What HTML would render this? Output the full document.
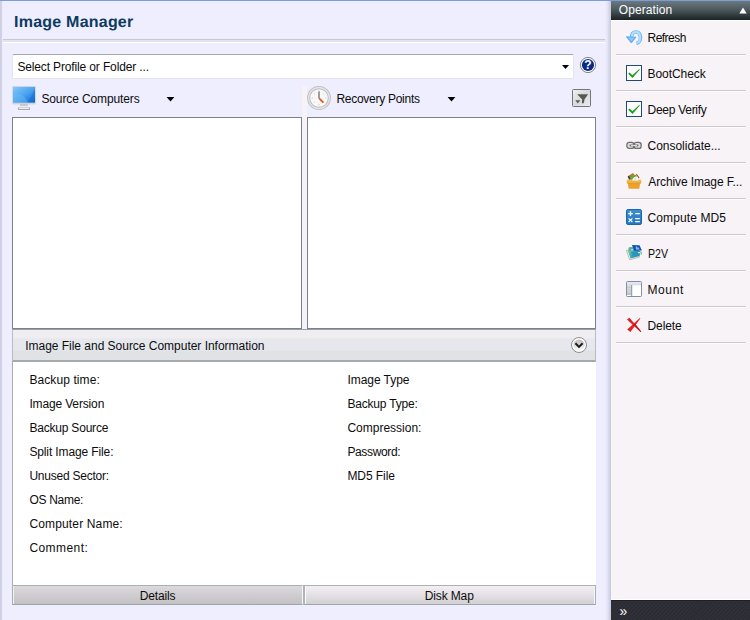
<!DOCTYPE html>
<html>
<head>
<meta charset="utf-8">
<title>Image Manager</title>
<style>
html,body{margin:0;padding:0;}
body{width:750px;height:620px;overflow:hidden;position:relative;background:#eeeefe;font-family:"Liberation Sans",sans-serif;font-size:12px;color:#0c0c0c;}
.abs{position:absolute;}
.t{position:absolute;white-space:nowrap;line-height:14px;height:14px;}
#topline{left:0;top:0;width:750px;height:1px;background:#7b9dd8;}
#leftedge{left:0;top:1px;width:3px;height:619px;background:linear-gradient(90deg,#cdcde1 0,#d6d6ea 2px,#ebebfb 2px);}
#title{font-size:16px;text-rendering:geometricPrecision;font-weight:bold;color:#0d3b5e;line-height:20px;height:20px;}
#hline{left:3px;top:39px;width:602px;height:3px;background:linear-gradient(#c8c8d0 0,#c8c8d0 1px,#e2e2ec 1px);}
#hline2{left:3px;top:42px;width:602px;height:1px;background:#ffffff;}
#combo{left:12px;top:54px;width:562px;height:25px;box-sizing:border-box;background:#fff;border:1px solid #e4e4ec;border-top-color:#a6a6ac;border-radius:2px;}
.list{background:#fff;border:1px solid #7a8090;box-sizing:border-box;}
#split{left:302px;top:86px;width:5px;height:243px;background:#f6f2f6;}
#infohdr{left:12px;top:329px;width:584px;height:33px;box-sizing:border-box;background:linear-gradient(#f0eef0 0,#efedef 8px,#e6e8ee 9px,#e5e7ed 20px,#dfe3e6 21px,#dfe3e6 30px);border-top:1px solid #989eaa;border-bottom:2px solid #a6aaae;border-left:1px solid #b8bcc2;border-right:1px solid #b8bcc2;}
#infobody{left:12px;top:362px;width:584px;height:223px;background:#fff;box-sizing:border-box;border-left:1px solid #acacac;}
.btn{box-sizing:border-box;height:20px;border-top:1px solid #a8b0b4;border-bottom:1px solid #9ca6a8;}
#shadow{left:605px;top:1px;width:6px;height:619px;background:linear-gradient(90deg,#eeeefe,#e4e4f6 40%,#c4c8d8);}
#panel{left:611px;top:0;width:139px;height:620px;background:#f7f3f7;}
#phdr{left:0;top:0;width:139px;height:21px;box-sizing:border-box;border-top:1px solid #7b9dd8;background:linear-gradient(#6c7a80 0,#4a575c 9px,#1a2224 19px,#fff 19px);}
.sep{position:absolute;left:5px;width:130px;height:1px;background:#cccacc;box-shadow:0 1px 0 #fdfbfd;}
.it{position:absolute;white-space:nowrap;line-height:14px;height:14px;}
#pbot{left:0;top:599px;width:139px;height:21px;box-sizing:border-box;border-top:1px solid #fff;background:linear-gradient(#1f1f25 0,#1f1f25 1px,rgba(0,0,0,0) 1px),repeating-linear-gradient(135deg,#2b2b33 0,#2b2b33 1.4px,#303038 1.4px,#303038 2.8px);}
</style>
</head>
<body>
<div class="abs" id="topline"></div>
<div class="abs" id="leftedge"></div>
<div class="t" id="title" style="left:14.1px;top:12.5px;letter-spacing:0.22px;">Image Manager</div>
<div class="abs" id="hline"></div>
<div class="abs" id="hline2"></div>

<div class="abs" id="combo"></div>
<div class="t" style="left:17.4px;top:60px;letter-spacing:-0.14px;">Select Profile or Folder ...</div>
<svg class="abs" style="left:561px;top:64px;" width="9" height="6" viewBox="0 0 9 6"><path d="M1 1H8L4.5 5Z" fill="#000"/></svg>

<!-- help icon -->
<svg class="abs" style="left:579px;top:56px;" width="18" height="18" viewBox="0 0 18 18">
  <circle cx="9" cy="9" r="7.6" fill="#fff" stroke="#74747e" stroke-width="0.9"/>
  <circle cx="9" cy="9" r="6.1" fill="#0a2a86"/>
  <text x="9" y="13" text-anchor="middle" font-family="Liberation Sans, sans-serif" font-weight="bold" font-size="12" fill="#fff">?</text>
</svg>

<!-- monitor icon -->
<svg class="abs" style="left:12px;top:86px;" width="24" height="24" viewBox="0 0 24 24">
  <defs>
    <linearGradient id="mg" x1="0" y1="0" x2="0.9" y2="1"><stop offset="0" stop-color="#86c8fc"/><stop offset="0.5" stop-color="#4ea6f0"/><stop offset="1" stop-color="#1670d8"/></linearGradient>
  </defs>
  <rect x="0.2" y="0" width="23.6" height="18.4" rx="0.8" fill="#d0d4d8"/>
  <rect x="1" y="1" width="22" height="15.6" fill="url(#mg)"/>
  <path d="M1 7.5C8 6.5 13 10 16 16.6H1Z" fill="#6cbcf8" opacity="0.45"/>
  <path d="M23 3L15.5 16.6H23Z" fill="#0c62d0" opacity="0.35"/>
  <rect x="8" y="18.4" width="7.8" height="1.4" fill="#b4b8bc"/>
  <rect x="8.4" y="19.8" width="7" height="1.9" fill="#eceef0"/>
  <rect x="6" y="21.5" width="12" height="2.2" rx="0.4" fill="#8e9296"/>
  <rect x="6.8" y="21.5" width="10.4" height="1.5" fill="#e6e9ec"/>
</svg>
<div class="t" style="left:41.4px;top:92px;letter-spacing:-0.12px;">Source Computers</div>
<svg class="abs" style="left:166px;top:96px;" width="9" height="7" viewBox="0 0 9 7"><path d="M0.6 0.9H8.4L4.5 5.4Z" fill="#000"/></svg>

<!-- clock icon -->
<svg class="abs" style="left:307px;top:86px;" width="24" height="24" viewBox="0 0 24 24">
  <circle cx="12" cy="12" r="11.9" fill="#c0c0c2"/>
  <circle cx="12" cy="12" r="10.9" fill="#e8e8ea"/>
  <circle cx="12" cy="12" r="9.8" fill="#bcbcbe"/>
  <circle cx="12" cy="12" r="8.8" fill="#f8f8fa"/>
  <g stroke="#c8c8cc" stroke-width="0.9">
    <path d="M12 4.6V6M12 18V19.4M4.6 12H6M18 12H19.4M7 7.6L7.9 8.4M17 7.6L16.1 8.4M7 16.4L7.9 15.6M17 16.4L16.1 15.6"/>
  </g>
  <path d="M12 5.4V12.6" stroke="#6a6a6e" stroke-width="1.3" fill="none"/>
  <path d="M12.2 12.4L16.4 16.6" stroke="#f04a0a" stroke-width="1.6" fill="none"/>
</svg>
<div class="t" style="left:336.4px;top:92px;letter-spacing:-0.27px;">Recovery Points</div>
<svg class="abs" style="left:447px;top:96px;" width="9" height="7" viewBox="0 0 9 7"><path d="M0.6 0.9H8.4L4.5 5.4Z" fill="#000"/></svg>

<!-- filter button -->
<svg class="abs" style="left:572px;top:89px;" width="19" height="18" viewBox="0 0 19 18">
  <defs><linearGradient id="fg" x1="0" y1="0" x2="1" y2="1"><stop offset="0" stop-color="#f0f0f0"/><stop offset="0.5" stop-color="#d8dada"/><stop offset="1" stop-color="#ececec"/></linearGradient></defs>
  <rect x="0.5" y="0.5" width="18" height="17" rx="1" fill="url(#fg)" stroke="#72767a"/>
  <path d="M5.2 5.2H16.1L12.4 10.4L12.2 12.6L11.6 14.2H9.8L10.2 10.4Z" fill="#565856"/>
  <path d="M3.3 11.2H8.3L5.8 14.6Z" fill="#5a5c5a"/>
</svg>

<div class="abs" id="split"></div>
<div class="abs list" style="left:12px;top:117px;width:290px;height:212px;"></div>
<div class="abs list" style="left:307px;top:117px;width:289px;height:212px;"></div>

<div class="abs" id="infohdr"></div>
<div class="t" style="left:25.2px;top:339px;letter-spacing:-0.02px;">Image File and Source Computer Information</div>
<svg class="abs" style="left:570px;top:336px;" width="18" height="18" viewBox="0 0 18 18">
  <defs><linearGradient id="cg" x1="0" y1="0" x2="0" y2="1"><stop offset="0" stop-color="#bcbcbe"/><stop offset="1" stop-color="#fdfdfd"/></linearGradient></defs>
  <circle cx="9" cy="9" r="7.5" fill="#fff" stroke="#8e8e92" stroke-width="1"/>
  <circle cx="9" cy="9" r="5.6" fill="url(#cg)"/>
  <path d="M5.4 7.3L9 10.9L12.6 7.3" stroke="#1a1a1a" stroke-width="2" fill="none"/>
</svg>

<div class="abs" id="infobody"></div>
<div class="t" style="left:29.4px;top:373px;letter-spacing:0.09px;">Backup time:</div>
<div class="t" style="left:29.4px;top:397px;letter-spacing:-0.15px;">Image Version</div>
<div class="t" style="left:29.4px;top:421px;letter-spacing:-0.2px;">Backup Source</div>
<div class="t" style="left:29.4px;top:445px;letter-spacing:-0.12px;">Split Image File:</div>
<div class="t" style="left:29.4px;top:469px;letter-spacing:-0.23px;">Unused Sector:</div>
<div class="t" style="left:29.4px;top:493px;letter-spacing:-0.29px;">OS Name:</div>
<div class="t" style="left:29.4px;top:517px;letter-spacing:0.15px;">Computer Name:</div>
<div class="t" style="left:29.4px;top:541px;letter-spacing:0.43px;">Comment:</div>
<div class="t" style="left:347.4px;top:373px;letter-spacing:-0.04px;">Image Type</div>
<div class="t" style="left:347.4px;top:397px;letter-spacing:-0.18px;">Backup Type:</div>
<div class="t" style="left:347.4px;top:421px;letter-spacing:0px;">Compression:</div>
<div class="t" style="left:347.4px;top:445px;letter-spacing:-0.35px;">Password:</div>
<div class="t" style="left:347.4px;top:469px;letter-spacing:-0.06px;">MD5 File</div>

<div class="abs btn" style="left:12px;top:585px;width:291px;background:linear-gradient(#dbd9db,#d0ced0 45%,#c3c1c3);border-left:1px solid #a8b0b4;border-right:1px solid #f6f6f6;box-shadow:inset 1px 0 #f2f0f2;"></div>
<div class="abs btn" style="left:303px;top:585px;width:293px;background:linear-gradient(#f3eff3,#e4e1e4 50%,#d3d0d3);border-left:2px solid #adb5b9;border-right:1px solid #a8b0b4;box-shadow:inset 1px 0 #fbfbfb,inset -1px 0 #f6f6f6;"></div>
<div class="t" style="left:139.8px;top:589px;letter-spacing:-0.15px;">Details</div>
<div class="t" style="left:424.8px;top:589px;letter-spacing:-0.14px;">Disk Map</div>

<div class="abs" id="shadow"></div>
<div class="abs" id="panel">
  <div class="abs" id="phdr"></div>
  <div class="t" style="left:7.7px;top:3px;color:#fff;letter-spacing:0.11px;">Operation</div>
  <svg class="abs" style="left:128px;top:7px;" width="8" height="7" viewBox="0 0 8 7"><path d="M0.3 6.6L4 0.6L7.7 6.6Z" fill="#fff"/></svg>

  <!-- refresh -->
  <svg class="abs" style="left:15px;top:29px;" width="17" height="16" viewBox="0 0 17 16">
    <path d="M10.4 14.4C13.4 13.6 14.8 10.6 14.4 7.6C14 4.6 12 2.9 9.9 2.9C7.4 2.9 5.7 4.8 5.5 8" stroke="#64b0f6" stroke-width="3.5" fill="none"/>
    <path d="M10.4 14.2C13.2 13.4 14.6 10.6 14.2 7.6C13.8 4.8 12 3.1 9.9 3.1C7.6 3.1 5.9 4.8 5.7 8" stroke="#b4defe" stroke-width="2.1" fill="none"/>
    <path d="M0.3 7.7L10 8.2L5.3 14Z" fill="#70b8f8" stroke="#4ca0f0" stroke-width="0.7"/>
    <path d="M2.6 8.6L7.8 8.9L5.3 12Z" fill="#8cc8fa"/>
  </svg>
  <div class="it" style="left:36.5px;top:31px;letter-spacing:-0.52px;">Refresh</div>
  <div class="sep" style="top:54px;"></div>

  <!-- checkbox -->
  <svg class="abs" style="left:15px;top:65px;" width="16" height="16" viewBox="0 0 16 16">
    <rect x="0.5" y="0.5" width="15" height="15" fill="#fff" stroke="#1c4a80"/>
    <path d="M2.2 8.7L3.5 7.6L6.4 10.3L13.3 4L13.9 4.5L6.5 12.9Z" fill="#17a017"/>
  </svg>
  <div class="it" style="left:36.5px;top:67px;letter-spacing:-0.06px;">BootCheck</div>
  <div class="sep" style="top:90px;"></div>

  <svg class="abs" style="left:15px;top:101px;" width="16" height="16" viewBox="0 0 16 16">
    <rect x="0.5" y="0.5" width="15" height="15" fill="#fff" stroke="#1c4a80"/>
    <path d="M2.2 8.7L3.5 7.6L6.4 10.3L13.3 4L13.9 4.5L6.5 12.9Z" fill="#17a017"/>
  </svg>
  <div class="it" style="left:36.5px;top:103px;letter-spacing:-0.27px;">Deep Verify</div>
  <div class="sep" style="top:126px;"></div>

  <!-- link -->
  <svg class="abs" style="left:15px;top:141px;" width="16" height="9" viewBox="0 0 16 9">
    <rect x="0.9" y="1.4" width="7" height="6" rx="2.2" fill="#e2e2e2" stroke="#6e6e6e" stroke-width="1.3"/>
    <rect x="8.1" y="1.4" width="7" height="6" rx="2.2" fill="#e2e2e2" stroke="#6e6e6e" stroke-width="1.3"/>
    <rect x="3.6" y="3.5" width="8.8" height="1.9" fill="#6e6e6e"/>
    <rect x="5" y="4" width="6" height="0.9" fill="#f0f0f0"/>
  </svg>
  <div class="it" style="left:36.5px;top:139px;letter-spacing:-0.02px;">Consolidate...</div>
  <div class="sep" style="top:162px;"></div>

  <!-- archive -->
  <svg class="abs" style="left:15px;top:172px;" width="16" height="18" viewBox="0 0 16 18">
    <defs><linearGradient id="ag" x1="0" y1="0" x2="0" y2="1"><stop offset="0" stop-color="#f4c05a"/><stop offset="1" stop-color="#eaa632"/></linearGradient></defs>
    <path d="M1.6 4.6L3.4 3.2L5.6 7.9H3.2Z" fill="#3a4652"/>
    <path d="M3 3.6L7 1L8.4 2.8L4.6 6.2Z" fill="#b4783a"/>
    <path d="M4.1 8.4C4.6 4.8 7.4 2.6 10.2 2.9L11.4 4.4C8.8 4.2 6.8 5.8 6.4 8.4Z" fill="#60b020"/>
    <path d="M10 2.2L10.9 1.9L13.4 5.6L12.6 6.4Z" fill="#b2441e"/>
    <rect x="0.7" y="7.4" width="14.6" height="4.4" rx="1.3" fill="url(#ag)"/>
    <path d="M6.3 8.6C6.6 5.6 9.4 4 11.6 5L12.6 8.6Z" fill="#f6f6fa"/>
    <path d="M8.2 6.6L9.6 6L10.4 7.4L9 8Z" fill="#d8d8e2"/>
    <path d="M2 11.6H14L13.5 16.1C13.5 16.5 13.2 16.7 12.8 16.7H3.2C2.8 16.7 2.5 16.5 2.5 16.1Z" fill="#eca22c"/>
    <path d="M1.8 11.3H14.2V12.1H1.8Z" fill="#dc962a"/>
  </svg>
  <div class="it" style="left:37.3px;top:175px;letter-spacing:-0.12px;">Archive Image F...</div>
  <div class="sep" style="top:198px;"></div>

  <!-- calc -->
  <svg class="abs" style="left:15px;top:209px;" width="16" height="16" viewBox="0 0 16 16">
    <defs><linearGradient id="kg" x1="0" y1="0" x2="0" y2="1"><stop offset="0" stop-color="#3d8fd4"/><stop offset="1" stop-color="#2576b6"/></linearGradient></defs>
    <rect x="0.5" y="0.5" width="15" height="15" rx="1.6" fill="url(#kg)" stroke="#1668b2"/>
    <path d="M2.2 4.6H6.8M4.5 2.3V6.9M9.2 4.6H13.8" stroke="#fff" stroke-width="1.3"/>
    <path d="M2.6 9.4L6.4 13M6.4 9.4L2.6 13" stroke="#fff" stroke-width="1.1"/>
    <path d="M9.2 9.7H13.8M9.2 12.7H13.8" stroke="#fff" stroke-width="1.3"/>
  </svg>
  <div class="it" style="left:36.5px;top:211px;letter-spacing:0.11px;">Compute MD5</div>
  <div class="sep" style="top:234px;"></div>

  <!-- p2v -->
  <svg class="abs" style="left:15px;top:244px;" width="17" height="17" viewBox="0 0 17 17">
    <defs><linearGradient id="pg" x1="0" y1="0.3" x2="1" y2="0.7"><stop offset="0" stop-color="#8ed0ae"/><stop offset="0.45" stop-color="#3aa4b8"/><stop offset="1" stop-color="#1c86b4"/></linearGradient></defs>
    <path d="M0.4 6.3L3.6 15.7L13.6 13.1L12.4 9Z" fill="#eef2ee" stroke="#a6ac9a" stroke-width="0.7"/>
    <path d="M1.9 7.5L2.8 3.6L6.6 3L14.6 7.6L13.4 12L4.6 14.5Z" fill="url(#pg)"/>
    <path d="M2.8 3.6L6.4 3L6.8 6.2L2.6 6.8Z" fill="#56b48e"/>
    <path d="M4.6 8L12.4 7.4L13.3 11.7L7.6 13Z" fill="#2a94bc" opacity="0.85"/>
    <path d="M5.9 0.9L13.5 1.2L15.9 6.4L8.3 6.7Z" fill="#0c52b4"/>
    <path d="M9.6 2.6L10.8 2.3L11.6 3.8L12.6 3.2L13.6 5.4L10 5.7Z" fill="#92aee6"/>
    <path d="M5.3 5.4L6.6 5L6.6 6.2L5.4 6.4Z" fill="#f6f6f0"/>
    <path d="M11.9 8L14 7.9L14.1 9.2L12.2 9.3Z" fill="#ececb0"/>
    <path d="M14.8 7.7L15.9 8L15.7 10.6L14.7 10.9Z" fill="#5cb894"/>
  </svg>
  <div class="it" style="left:36.5px;top:247px;transform:scaleX(0.88);transform-origin:0 0;">P2V</div>
  <div class="sep" style="top:270px;"></div>

  <!-- mount -->
  <svg class="abs" style="left:15px;top:281px;" width="16" height="16" viewBox="0 0 16 16">
    <rect x="0.5" y="0.5" width="15" height="15" rx="0.8" fill="#fff" stroke="#8490a0"/>
    <rect x="1" y="1" width="14" height="2.4" fill="#e2e6f0"/>
    <rect x="1" y="3.4" width="14" height="0.8" fill="#c8ccd4"/>
    <rect x="1" y="4.2" width="4.4" height="8.6" fill="#d6dade"/>
    <path d="M1 6.4H5.4M1 8.6H5.4M1 10.8H5.4" stroke="#c0c4c8" stroke-width="0.7"/>
    <rect x="1" y="12.6" width="4.6" height="0.9" fill="#8490a0"/>
    <rect x="5.2" y="4" width="1" height="11" fill="#8490a0"/>
  </svg>
  <div class="it" style="left:36.5px;top:283px;letter-spacing:0.6px;">Mount</div>
  <div class="sep" style="top:306px;"></div>

  <!-- delete -->
  <svg class="abs" style="left:15px;top:317px;" width="16" height="16" viewBox="0 0 16 16">
    <path d="M13.8 1L14.4 1.4L4.4 15L1.2 12.6Z" fill="#e62222"/>
    <path d="M1 2.6L3.4 0.8L15.2 14.4L14.6 15Z" fill="#dc1e1e"/>
    <path d="M7.6 8L9 6.6L15.2 14.4L14.6 15Z" fill="#b81a1a"/>
  </svg>
  <div class="it" style="left:36.5px;top:319px;letter-spacing:-0.1px;">Delete</div>
  <div class="sep" style="top:342px;"></div>

  <div class="abs" id="pbot"></div>
  <div class="t" style="left:8.5px;top:604px;color:#fff;font-size:14px;">»</div>
</div>
</body>
</html>
